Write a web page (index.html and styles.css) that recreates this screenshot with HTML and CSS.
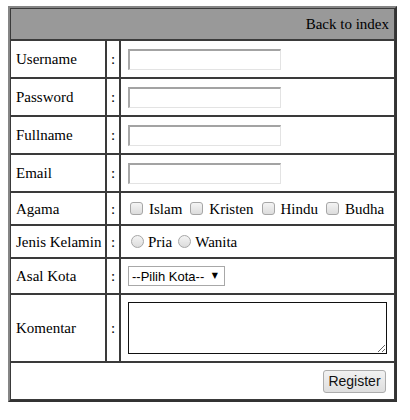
FILE: index.html
```html
<!DOCTYPE html>
<html>
<head>
<meta charset="utf-8">
<link rel="stylesheet" href="styles.css">
</head>
<body>
<form class="reg">
<table class="grid">
  <colgroup><col class="c-lbl"><col class="c-sep"><col class="c-fld"></colgroup>
  <tr class="r-head"><td colspan="3" class="head">Back to index</td></tr>
  <tr class="r-txt"><td class="lbl">Username</td><td class="sep">:</td><td class="fld"><input class="txt" type="text"></td></tr>
  <tr class="r-txt"><td class="lbl">Password</td><td class="sep">:</td><td class="fld"><input class="txt" type="password"></td></tr>
  <tr class="r-txt"><td class="lbl">Fullname</td><td class="sep">:</td><td class="fld"><input class="txt" type="text"></td></tr>
  <tr class="r-txt"><td class="lbl">Email</td><td class="sep">:</td><td class="fld"><input class="txt" type="text"></td></tr>
  <tr class="r-opt"><td class="lbl">Agama</td><td class="sep">:</td><td class="fld">
    <div class="opts">
      <label class="opt"><input class="cb" type="checkbox">Islam</label>
      <label class="opt"><input class="cb" type="checkbox">Kristen</label>
      <label class="opt"><input class="cb" type="checkbox">Hindu</label>
      <label class="opt"><input class="cb" type="checkbox">Budha</label>
    </div>
  </td></tr>
  <tr class="r-opt"><td class="lbl">Jenis Kelamin</td><td class="sep">:</td><td class="fld">
    <div class="opts radios">
      <label class="opt"><input class="rb" type="radio" name="jk">Pria</label>
      <label class="opt"><input class="rb" type="radio" name="jk">Wanita</label>
    </div>
  </td></tr>
  <tr class="r-sel"><td class="lbl">Asal Kota</td><td class="sep">:</td><td class="fld">
    <span class="selwrap"><select class="sel"><option>--Pilih Kota--</option></select><span class="arrow">&#9660;</span></span>
  </td></tr>
  <tr class="r-area"><td class="lbl">Komentar</td><td class="sep">:</td><td class="fld"><textarea class="area"></textarea></td></tr>
  <tr class="r-foot"><td colspan="3" class="foot"><button type="button" class="btn">Register</button></td></tr>
</table>
</form>
</body>
</html>
```
FILE: styles.css
```css
html, body {
  margin: 0;
  padding: 0;
  background: #ffffff;
}
body {
  font-family: "Liberation Serif", "Times New Roman", serif;
  font-size: 15px;
  color: #000;
}
.reg {
  margin: 0;
  padding: 6px 0 0 8px;
}
.grid {
  border-collapse: separate;
  border-spacing: 0;
  border-style: solid;
  border-width: 2px;
  border-color: #858585 #333333 #333333 #858585;
  width: 389px;
  table-layout: fixed;
}
.c-lbl { width: 96px; }
.c-sep { width: 14px; }
.c-fld { width: 275px; }
.grid td {
  border: 1px solid #3a3a3a;
  padding: 0;
  vertical-align: middle;
  line-height: 18px;
}
.r-head { height: 32px; }
.r-txt { height: 38px; }
.r-opt { height: 33px; }
.r-sel { height: 36px; }
.r-area { height: 68px; }
.r-foot { height: 38px; }

.grid td.head {
  background: #999999;
  text-align: right;
  padding-right: 5px;
}
.grid td.lbl {
  padding-left: 5px;
  white-space: nowrap;
}
.grid td.sep {
  text-align: center;
}
.grid td.fld {
  padding-left: 7px;
}
.txt {
  display: block;
  box-sizing: border-box;
  width: 153px;
  height: 21px;
  margin: 0;
  padding: 1px 3px;
  border-style: solid;
  border-width: 2px 1px 1px 2px;
  border-color: #a3a3a3 #e3e3e3 #e3e3e3 #a8a8a8;
  background: #fff;
  outline: none;
}
.opts {
  display: flex;
  align-items: center;
}
.opt {
  display: inline-flex;
  align-items: center;
  margin-right: 6px;
}
.cb, .rb {
  appearance: none;
  -webkit-appearance: none;
  width: 13px;
  height: 13px;
  box-sizing: border-box;
  border: 1px solid #a6a6a6;
  background: linear-gradient(#f4f4f4, #dcdcdc);
}
.cb {
  border-radius: 3px;
  margin: 0 6px 0 2px;
}
.rb {
  border-radius: 50%;
  margin: 0 4px 0 3px;
}
.radios .opt { margin-right: 3px; }
.selwrap {
  position: relative;
  display: inline-block;
  vertical-align: middle;
}
.sel {
  appearance: none;
  -webkit-appearance: none;
  box-sizing: border-box;
  width: 97px;
  height: 20px;
  margin: 0;
  padding: 0 0 0 3px;
  border: 1px solid #a8a8a8;
  background: #fff;
  font-family: "Liberation Sans", Arial, sans-serif;
  font-size: 13px;
  color: #000;
  display: block;
}
.arrow {
  position: absolute;
  right: 7px;
  top: 5px;
  font-size: 8px;
  line-height: 10px;
  font-family: "DejaVu Sans", sans-serif;
  pointer-events: none;
}
.area {
  display: block;
  box-sizing: border-box;
  width: 259px;
  height: 52px;
  margin: 0;
  border: 1px solid #111111;
  padding: 2px;
  font-family: "Liberation Mono", monospace;
  font-size: 13px;
}
.grid td.foot {
  text-align: right;
  padding-right: 8px;
}
.btn {
  box-sizing: border-box;
  height: 23px;
  width: 63px;
  padding: 0;
  border: 1px solid #acacac;
  border-radius: 3px;
  background: linear-gradient(#f2f2f2, #dedede);
  font-family: "Liberation Sans", Arial, sans-serif;
  font-size: 14px;
  color: #111;
  vertical-align: middle;
}
```
